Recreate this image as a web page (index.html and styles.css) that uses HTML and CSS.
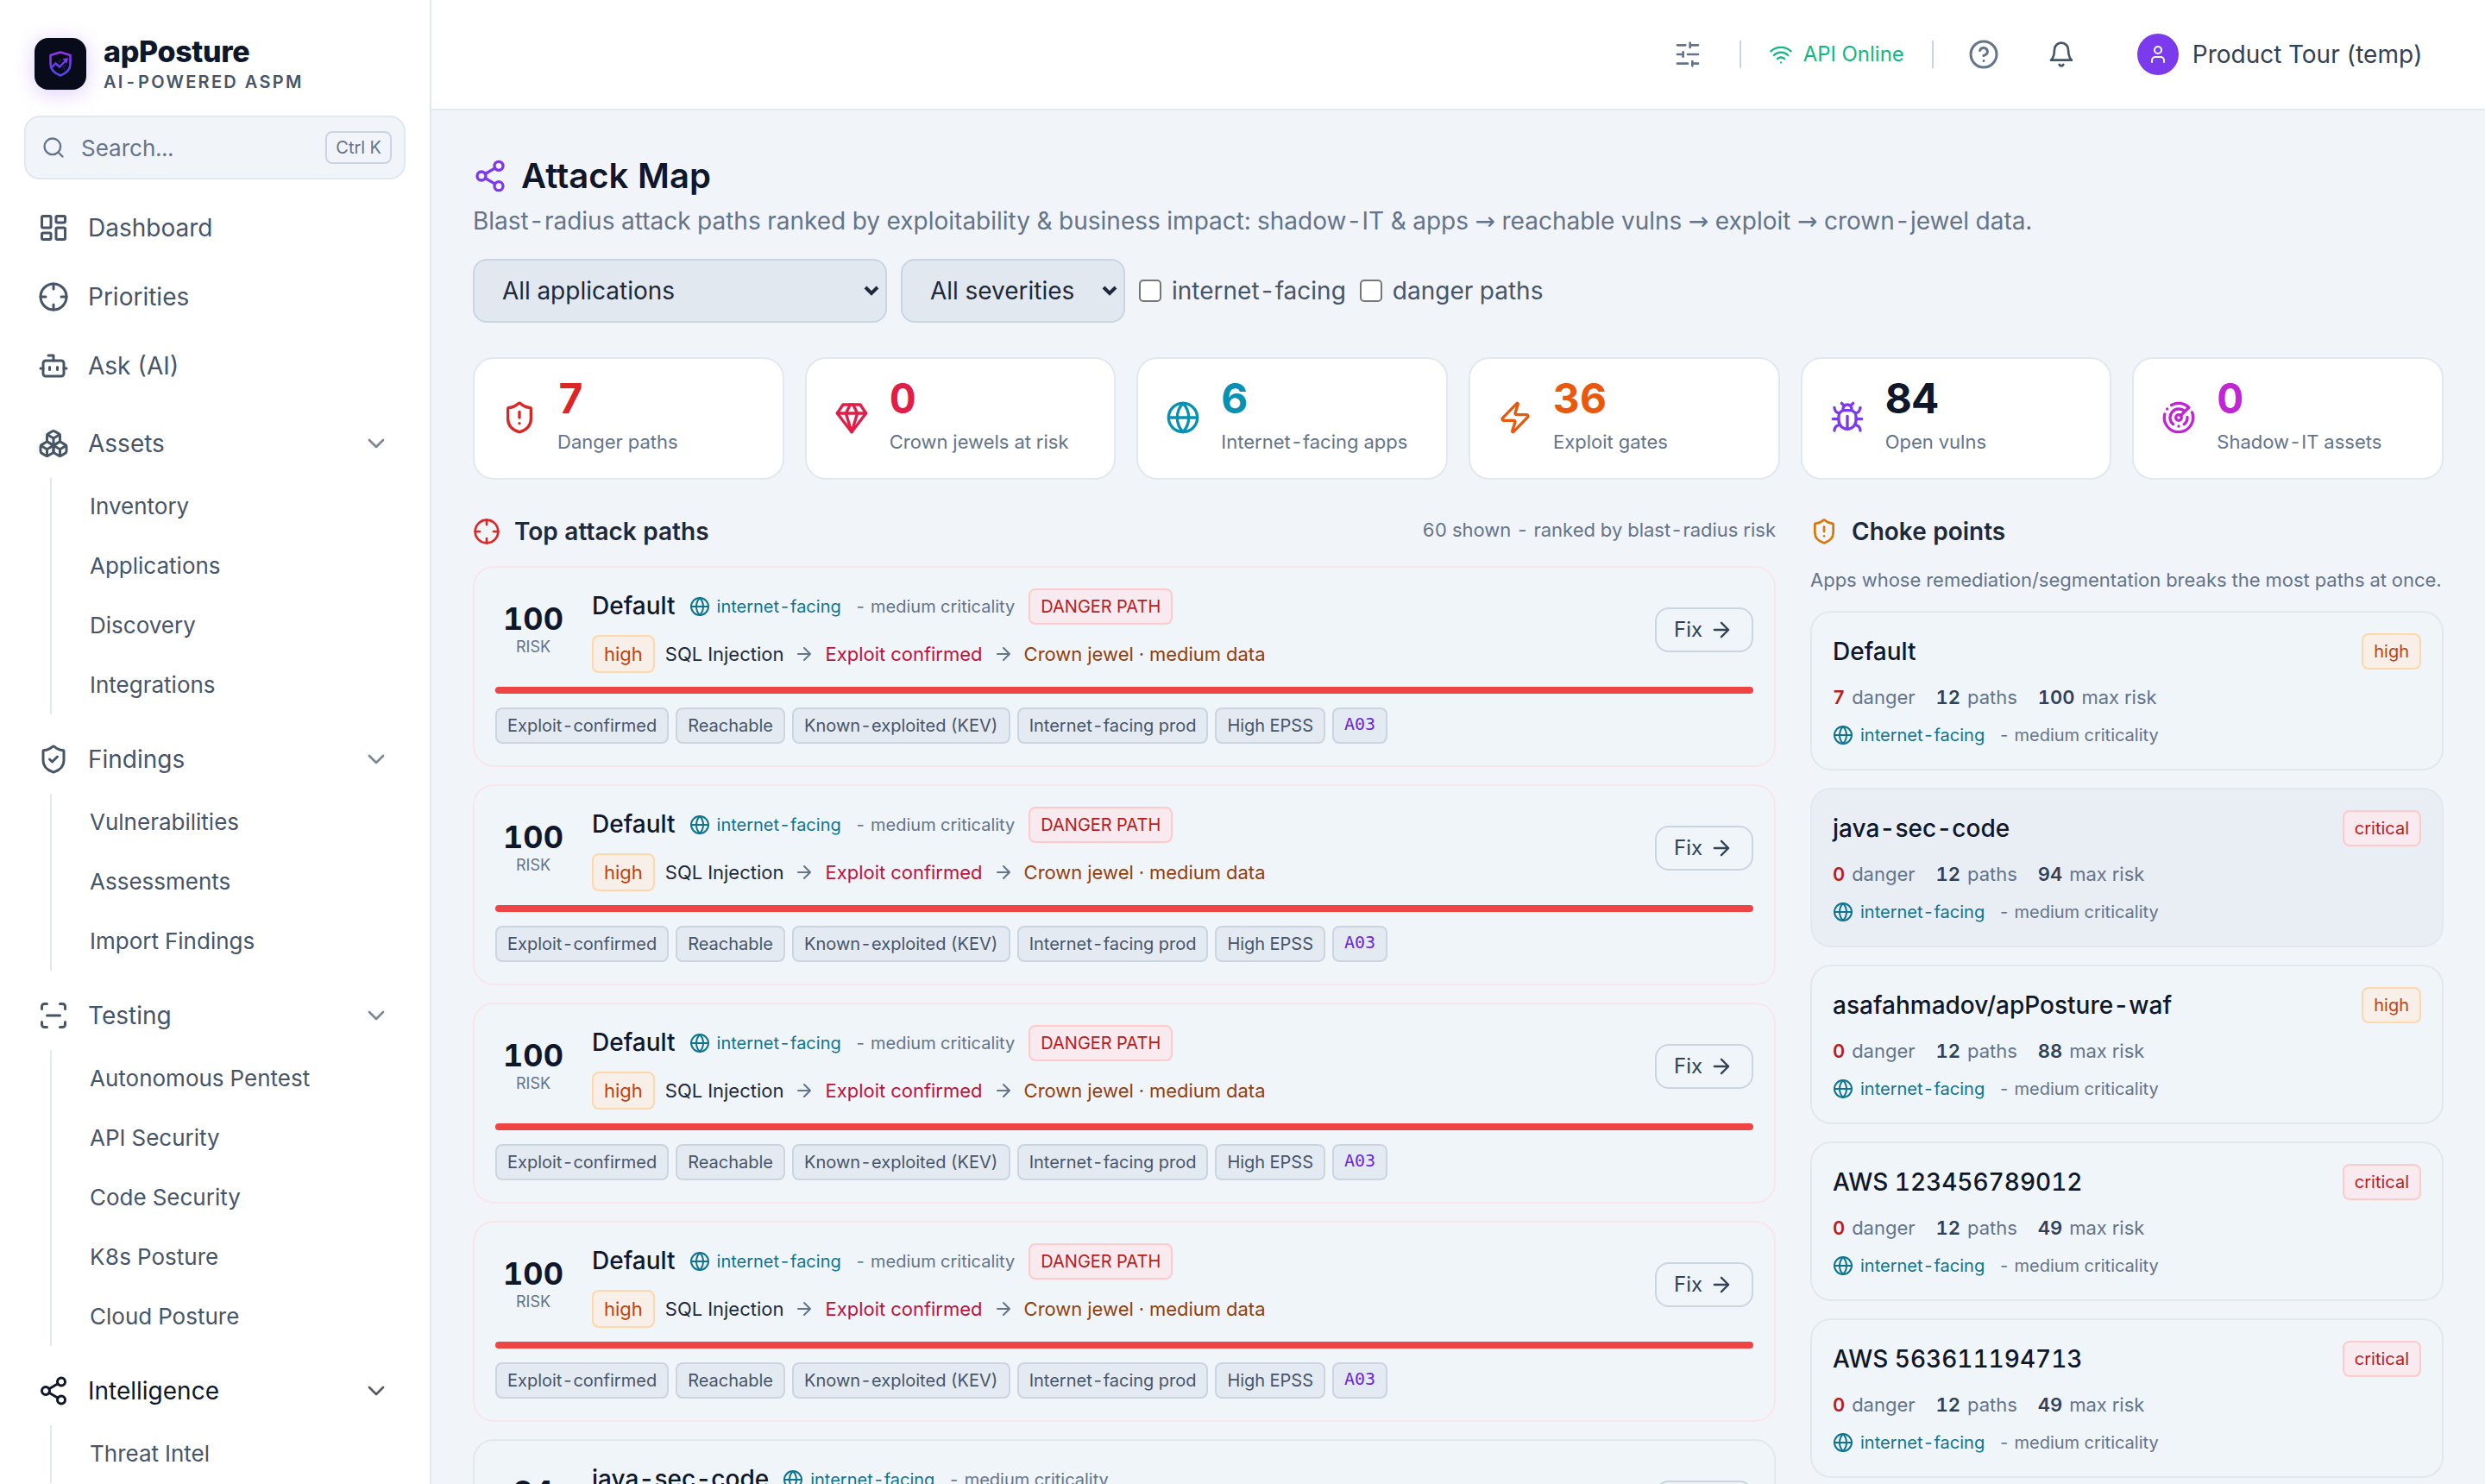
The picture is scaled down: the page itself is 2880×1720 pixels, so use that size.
FILE: index.html
```html
<!DOCTYPE html>
<html lang="en">
<head>
    <meta charset="UTF-8">
    <meta name="viewport" content="width=device-width, initial-scale=1.0">
    <title>apPosture - Attack Map</title>
    <link rel="stylesheet" href="styles.css">
</head>
<body>
    <!-- Icon sprite -->
    <svg class="sprite" aria-hidden="true">
        <symbol id="i-dashboard" viewBox="0 0 24 24"><rect width="7" height="9" x="3" y="3" rx="1"/><rect width="7" height="5" x="14" y="3" rx="1"/><rect width="7" height="9" x="14" y="12" rx="1"/><rect width="7" height="5" x="3" y="16" rx="1"/></symbol>
        <symbol id="i-crosshair" viewBox="0 0 24 24"><circle cx="12" cy="12" r="10"/><path d="M22 12h-4M6 12H2M12 6V2M12 22v-4"/></symbol>
        <symbol id="i-bot" viewBox="0 0 24 24"><path d="M12 8V4H8"/><rect width="16" height="12" x="4" y="8" rx="2"/><path d="M2 14h2M20 14h2M15 13v2M9 13v2"/></symbol>
        <symbol id="i-boxes" viewBox="0 0 24 24"><path d="M2.97 12.92A2 2 0 0 0 2 14.63v3.24a2 2 0 0 0 .97 1.71l3 1.8a2 2 0 0 0 2.06 0L12 19v-5.5l-5-3-4.03 2.42Z"/><path d="m7 16.5-4.74-2.85M7 16.5l5-3M7 16.5v5.17"/><path d="M12 13.5V19l3.97 2.38a2 2 0 0 0 2.06 0l3-1.8a2 2 0 0 0 .97-1.71v-3.24a2 2 0 0 0-.97-1.71L17 10.5l-5 3Z"/><path d="m17 16.5-5-3M17 16.5l4.74-2.85M17 16.5v5.17"/><path d="M7.97 4.42A2 2 0 0 0 7 6.13v4.37l5 3 5-3V6.13a2 2 0 0 0-.97-1.71l-3-1.8a2 2 0 0 0-2.06 0l-3 1.8Z"/><path d="M12 8 7.26 5.15M12 8l4.74-2.85M12 13.5V8"/></symbol>
        <symbol id="i-shield-check" viewBox="0 0 24 24"><path d="M20 13c0 5-3.5 7.5-7.66 8.95a1 1 0 0 1-.67-.01C7.5 20.5 4 18 4 13V6a1 1 0 0 1 1-1c2 0 4.5-1.2 6.24-2.72a1.17 1.17 0 0 1 1.52 0C14.51 3.81 17 5 19 5a1 1 0 0 1 1 1z"/><path d="m9 12 2 2 4-4"/></symbol>
        <symbol id="i-shield-alert" viewBox="0 0 24 24"><path d="M20 13c0 5-3.5 7.5-7.66 8.95a1 1 0 0 1-.67-.01C7.5 20.5 4 18 4 13V6a1 1 0 0 1 1-1c2 0 4.5-1.2 6.24-2.72a1.17 1.17 0 0 1 1.52 0C14.51 3.81 17 5 19 5a1 1 0 0 1 1 1z"/><path d="M12 8v4M12 16h.01"/></symbol>
        <symbol id="i-scan" viewBox="0 0 24 24"><path d="M3 7V5a2 2 0 0 1 2-2h2M17 3h2a2 2 0 0 1 2 2v2M21 17v2a2 2 0 0 1-2 2h-2M7 21H5a2 2 0 0 1-2-2v-2M7 12h10"/></symbol>
        <symbol id="i-share" viewBox="0 0 24 24"><circle cx="18" cy="5" r="3"/><circle cx="6" cy="12" r="3"/><circle cx="18" cy="19" r="3"/><path d="m8.59 13.51 6.83 3.98M15.41 6.51l-6.82 3.98"/></symbol>
        <symbol id="i-chevron" viewBox="0 0 24 24"><path d="m6 9 6 6 6-6"/></symbol>
        <symbol id="i-search" viewBox="0 0 24 24"><circle cx="11" cy="11" r="8"/><path d="m21 21-4.3-4.3"/></symbol>
        <symbol id="i-sliders" viewBox="0 0 24 24"><path d="M21 4h-7M10 4H3M21 12h-9M8 12H3M21 20h-5M12 20H3M14 2v4M8 10v4M16 18v4"/></symbol>
        <symbol id="i-wifi" viewBox="0 0 24 24"><path d="M12 20h.01M2 8.82a15 15 0 0 1 20 0M5 12.859a10 10 0 0 1 14 0M8.5 16.429a5 5 0 0 1 7 0"/></symbol>
        <symbol id="i-help" viewBox="0 0 24 24"><circle cx="12" cy="12" r="10"/><path d="M9.09 9a3 3 0 0 1 5.83 1c0 2-3 3-3 3M12 17h.01"/></symbol>
        <symbol id="i-bell" viewBox="0 0 24 24"><path d="M6 8a6 6 0 0 1 12 0c0 7 3 9 3 9H3s3-2 3-9M10.3 21a1.94 1.94 0 0 0 3.4 0"/></symbol>
        <symbol id="i-user" viewBox="0 0 24 24"><path d="M19 21v-2a4 4 0 0 0-4-4H9a4 4 0 0 0-4 4v2"/><circle cx="12" cy="7" r="4"/></symbol>
        <symbol id="i-gem" viewBox="0 0 24 24"><path d="M6 3h12l4 6-10 13L2 9Z"/><path d="M11 3 8 9l4 13 4-13-3-6M2 9h20"/></symbol>
        <symbol id="i-globe" viewBox="0 0 24 24"><circle cx="12" cy="12" r="10"/><path d="M12 2a14.5 14.5 0 0 0 0 20 14.5 14.5 0 0 0 0-20M2 12h20"/></symbol>
        <symbol id="i-zap" viewBox="0 0 24 24"><path d="M4 14a1 1 0 0 1-.78-1.63l9.9-10.2a.5.5 0 0 1 .86.46l-1.92 6.02A1 1 0 0 0 13 10h7a1 1 0 0 1 .78 1.63l-9.9 10.2a.5.5 0 0 1-.86-.46l1.92-6.02A1 1 0 0 0 11 14z"/></symbol>
        <symbol id="i-bug" viewBox="0 0 24 24"><path d="m8 2 1.88 1.88M14.12 3.88 16 2M9 7.13v-1a3.003 3.003 0 1 1 6 0v1M12 20c-3.3 0-6-2.7-6-6v-3a4 4 0 0 1 4-4h4a4 4 0 0 1 4 4v3c0 3.3-2.7 6-6 6M12 20v-9M6.53 9C4.6 8.8 3 7.1 3 5M6 13H2M3 21c0-2.1 1.7-3.9 3.8-4M20.97 5c0 2.1-1.6 3.8-3.5 4M22 13h-4M17.2 17c2.1.1 3.8 1.9 3.8 4"/></symbol>
        <symbol id="i-radar" viewBox="0 0 24 24"><path d="M19.07 4.93A10 10 0 0 0 6.99 3.34M4 6h.01M2.29 9.62A10 10 0 1 0 21.31 8.35M16.24 7.76A6 6 0 1 0 8.23 16.67M12 18h.01M17.99 11.66A6 6 0 0 1 15.77 16.67M13.41 10.59l5.66-5.66"/><circle cx="12" cy="12" r="2"/></symbol>
        <symbol id="i-arrow" viewBox="0 0 24 24"><path d="M5 12h14M12 5l7 7-7 7"/></symbol>
    </svg>

    <aside class="sidebar">
        <div class="brand">
            <div class="brand-logo">
                <svg viewBox="0 0 26 30">
                    <defs>
                        <linearGradient id="brandGradient" x1="0" y1="0" x2="0" y2="1">
                            <stop offset="0" stop-color="#9333ea"/>
                            <stop offset="1" stop-color="#4f46e5"/>
                        </linearGradient>
                    </defs>
                    <path d="M13 1.5 24.5 5v10c0 6.500-5 11-11.500 13.500C6.500 26 1.500 21.500 1.500 15V5Z" fill="none" stroke="url(#brandGradient)" stroke-width="2.600" stroke-linejoin="round"/>
                    <path d="m3 19 4.500-4.500 4.500 4L19 11.500" fill="none" stroke="#6d3df0" stroke-width="2.400"/>
                    <path d="m15.500 9.500 6.500-1.500-1.500 6.500Z" fill="#7c3aed"/>
                    <path d="M11 12.500h1.500M13 10.500h1M15.500 19h2M18 17h1.500M17 21h1" stroke="#4c35b5" stroke-width="1.200"/>
                </svg>
            </div>
            <div>
                <div class="brand-name">apPosture</div>
                <div class="brand-tagline">AI-POWERED ASPM</div>
            </div>
        </div>

        <div class="search">
            <svg class="icon"><use href="#i-search"/></svg>
            <span>Search...</span>
            <kbd>Ctrl K</kbd>
        </div>

        <nav class="nav">
            <a class="nav-item"><svg class="icon"><use href="#i-dashboard"/></svg>Dashboard</a>
            <a class="nav-item"><svg class="icon"><use href="#i-crosshair"/></svg>Priorities</a>
            <a class="nav-item"><svg class="icon"><use href="#i-bot"/></svg>Ask (AI)</a>

            <div class="nav-section">
                <div class="nav-item"><svg class="icon"><use href="#i-boxes"/></svg>Assets<svg class="icon chevron"><use href="#i-chevron"/></svg></div>
                <div class="nav-sub">
                    <a>Inventory</a>
                    <a>Applications</a>
                    <a>Discovery</a>
                    <a>Integrations</a>
                </div>
            </div>

            <div class="nav-section">
                <div class="nav-item"><svg class="icon"><use href="#i-shield-check"/></svg>Findings<svg class="icon chevron"><use href="#i-chevron"/></svg></div>
                <div class="nav-sub">
                    <a>Vulnerabilities</a>
                    <a>Assessments</a>
                    <a>Import Findings</a>
                </div>
            </div>

            <div class="nav-section">
                <div class="nav-item"><svg class="icon"><use href="#i-scan"/></svg>Testing<svg class="icon chevron"><use href="#i-chevron"/></svg></div>
                <div class="nav-sub">
                    <a>Autonomous Pentest</a>
                    <a>API Security</a>
                    <a>Code Security</a>
                    <a>K8s Posture</a>
                    <a>Cloud Posture</a>
                </div>
            </div>

            <div class="nav-section">
                <div class="nav-item active"><svg class="icon"><use href="#i-share"/></svg>Intelligence<svg class="icon chevron"><use href="#i-chevron"/></svg></div>
                <div class="nav-sub">
                    <a>Threat Intel</a>
                </div>
            </div>
        </nav>
    </aside>

    <div class="main">
        <header class="topbar">
            <svg class="icon sliders"><use href="#i-sliders"/></svg>
            <span class="divider"></span>
            <div class="api-status"><svg class="icon"><use href="#i-wifi"/></svg>API Online</div>
            <span class="divider"></span>
            <svg class="icon help"><use href="#i-help"/></svg>
            <svg class="icon bell"><use href="#i-bell"/></svg>
            <div class="user">
                <span class="avatar"><svg class="icon"><use href="#i-user"/></svg></span>
                Product Tour (temp)
            </div>
        </header>

        <main class="content">
            <h1><svg class="icon"><use href="#i-share"/></svg>Attack Map</h1>
            <p class="subtitle">Blast-radius attack paths ranked by exploitability &amp; business impact: shadow-IT &amp; apps <i>→</i> reachable vulns <i>→</i> exploit <i>→</i> crown-jewel data.</p>

            <div class="filters">
                <div class="select select-apps">
                    <select><option>All applications</option></select>
                    <svg viewBox="0 0 18 12"><path d="m2 2 7 7 7-7"/></svg>
                </div>
                <div class="select select-severity">
                    <select><option>All severities</option></select>
                    <svg viewBox="0 0 18 12"><path d="m2 2 7 7 7-7"/></svg>
                </div>
                <label><input type="checkbox">internet-facing</label>
                <label><input type="checkbox">danger paths</label>
            </div>

            <div class="stats">
                <div class="stat red"><svg class="icon"><use href="#i-shield-alert"/></svg><div><div class="stat-value">7</div><div class="stat-label">Danger paths</div></div></div>
                <div class="stat rose"><svg class="icon"><use href="#i-gem"/></svg><div><div class="stat-value">0</div><div class="stat-label">Crown jewels at risk</div></div></div>
                <div class="stat cyan"><svg class="icon"><use href="#i-globe"/></svg><div><div class="stat-value">6</div><div class="stat-label">Internet-facing apps</div></div></div>
                <div class="stat orange"><svg class="icon"><use href="#i-zap"/></svg><div><div class="stat-value">36</div><div class="stat-label">Exploit gates</div></div></div>
                <div class="stat violet"><svg class="icon"><use href="#i-bug"/></svg><div><div class="stat-value">84</div><div class="stat-label">Open vulns</div></div></div>
                <div class="stat fuchsia"><svg class="icon"><use href="#i-radar"/></svg><div><div class="stat-value">0</div><div class="stat-label">Shadow-IT assets</div></div></div>
            </div>

            <div class="columns">
                <section>
                    <div class="section-head">
                        <svg class="icon red"><use href="#i-crosshair"/></svg>
                        <h2>Top attack paths</h2>
                        <span class="section-note">60 shown - ranked by blast-radius risk</span>
                    </div>

                    <div class="path-card danger">
                        <div class="path-top">
                            <div class="score"><b>100</b><span>RISK</span></div>
                            <div class="path-info">
                                <div class="path-title"><strong>Default</strong><span class="facing"><svg class="icon"><use href="#i-globe"/></svg>internet-facing</span><span class="criticality">- medium criticality</span><span class="badge critical">DANGER PATH</span></div>
                                <div class="path-chain"><span class="badge high">high</span><span>SQL Injection</span><svg class="icon"><use href="#i-arrow"/></svg><span class="exploit">Exploit confirmed</span><svg class="icon"><use href="#i-arrow"/></svg><span class="jewel">Crown jewel · medium data</span></div>
                            </div>
                            <button class="fix">Fix<svg class="icon"><use href="#i-arrow"/></svg></button>
                        </div>
                        <div class="risk-bar"></div>
                        <div class="chips"><span>Exploit-confirmed</span><span>Reachable</span><span>Known-exploited (KEV)</span><span>Internet-facing prod</span><span>High EPSS</span><span class="owasp">A03</span></div>
                    </div>

                    <div class="path-card danger">
                        <div class="path-top">
                            <div class="score"><b>100</b><span>RISK</span></div>
                            <div class="path-info">
                                <div class="path-title"><strong>Default</strong><span class="facing"><svg class="icon"><use href="#i-globe"/></svg>internet-facing</span><span class="criticality">- medium criticality</span><span class="badge critical">DANGER PATH</span></div>
                                <div class="path-chain"><span class="badge high">high</span><span>SQL Injection</span><svg class="icon"><use href="#i-arrow"/></svg><span class="exploit">Exploit confirmed</span><svg class="icon"><use href="#i-arrow"/></svg><span class="jewel">Crown jewel · medium data</span></div>
                            </div>
                            <button class="fix">Fix<svg class="icon"><use href="#i-arrow"/></svg></button>
                        </div>
                        <div class="risk-bar"></div>
                        <div class="chips"><span>Exploit-confirmed</span><span>Reachable</span><span>Known-exploited (KEV)</span><span>Internet-facing prod</span><span>High EPSS</span><span class="owasp">A03</span></div>
                    </div>

                    <div class="path-card danger">
                        <div class="path-top">
                            <div class="score"><b>100</b><span>RISK</span></div>
                            <div class="path-info">
                                <div class="path-title"><strong>Default</strong><span class="facing"><svg class="icon"><use href="#i-globe"/></svg>internet-facing</span><span class="criticality">- medium criticality</span><span class="badge critical">DANGER PATH</span></div>
                                <div class="path-chain"><span class="badge high">high</span><span>SQL Injection</span><svg class="icon"><use href="#i-arrow"/></svg><span class="exploit">Exploit confirmed</span><svg class="icon"><use href="#i-arrow"/></svg><span class="jewel">Crown jewel · medium data</span></div>
                            </div>
                            <button class="fix">Fix<svg class="icon"><use href="#i-arrow"/></svg></button>
                        </div>
                        <div class="risk-bar"></div>
                        <div class="chips"><span>Exploit-confirmed</span><span>Reachable</span><span>Known-exploited (KEV)</span><span>Internet-facing prod</span><span>High EPSS</span><span class="owasp">A03</span></div>
                    </div>

                    <div class="path-card danger">
                        <div class="path-top">
                            <div class="score"><b>100</b><span>RISK</span></div>
                            <div class="path-info">
                                <div class="path-title"><strong>Default</strong><span class="facing"><svg class="icon"><use href="#i-globe"/></svg>internet-facing</span><span class="criticality">- medium criticality</span><span class="badge critical">DANGER PATH</span></div>
                                <div class="path-chain"><span class="badge high">high</span><span>SQL Injection</span><svg class="icon"><use href="#i-arrow"/></svg><span class="exploit">Exploit confirmed</span><svg class="icon"><use href="#i-arrow"/></svg><span class="jewel">Crown jewel · medium data</span></div>
                            </div>
                            <button class="fix">Fix<svg class="icon"><use href="#i-arrow"/></svg></button>
                        </div>
                        <div class="risk-bar"></div>
                        <div class="chips"><span>Exploit-confirmed</span><span>Reachable</span><span>Known-exploited (KEV)</span><span>Internet-facing prod</span><span>High EPSS</span><span class="owasp">A03</span></div>
                    </div>

                    <div class="path-card">
                        <div class="path-top">
                            <div class="score"><b>94</b><span>RISK</span></div>
                            <div class="path-info">
                                <div class="path-title"><strong>java-sec-code</strong><span class="facing"><svg class="icon"><use href="#i-globe"/></svg>internet-facing</span><span class="criticality">- medium criticality</span></div>
                            </div>
                            <button class="fix">Fix<svg class="icon"><use href="#i-arrow"/></svg></button>
                        </div>
                    </div>
                </section>

                <section>
                    <div class="section-head">
                        <svg class="icon amber"><use href="#i-shield-alert"/></svg>
                        <h2>Choke points</h2>
                    </div>
                    <p class="section-desc">Apps whose remediation/segmentation breaks the most paths at once.</p>

                    <div class="choke-card">
                        <div class="choke-top"><strong>Default</strong><span class="badge high">high</span></div>
                        <div class="choke-stats"><span><b class="hot">7</b> danger</span><span><b>12</b> paths</span><span><b>100</b> max risk</span></div>
                        <div class="choke-meta"><span class="facing"><svg class="icon"><use href="#i-globe"/></svg>internet-facing</span><span class="criticality">- medium criticality</span></div>
                    </div>
                    <div class="choke-card hover">
                        <div class="choke-top"><strong>java-sec-code</strong><span class="badge critical">critical</span></div>
                        <div class="choke-stats"><span><b class="hot">0</b> danger</span><span><b>12</b> paths</span><span><b>94</b> max risk</span></div>
                        <div class="choke-meta"><span class="facing"><svg class="icon"><use href="#i-globe"/></svg>internet-facing</span><span class="criticality">- medium criticality</span></div>
                    </div>
                    <div class="choke-card">
                        <div class="choke-top"><strong>asafahmadov/apPosture-waf</strong><span class="badge high">high</span></div>
                        <div class="choke-stats"><span><b class="hot">0</b> danger</span><span><b>12</b> paths</span><span><b>88</b> max risk</span></div>
                        <div class="choke-meta"><span class="facing"><svg class="icon"><use href="#i-globe"/></svg>internet-facing</span><span class="criticality">- medium criticality</span></div>
                    </div>
                    <div class="choke-card">
                        <div class="choke-top"><strong>AWS 123456789012</strong><span class="badge critical">critical</span></div>
                        <div class="choke-stats"><span><b class="hot">0</b> danger</span><span><b>12</b> paths</span><span><b>49</b> max risk</span></div>
                        <div class="choke-meta"><span class="facing"><svg class="icon"><use href="#i-globe"/></svg>internet-facing</span><span class="criticality">- medium criticality</span></div>
                    </div>
                    <div class="choke-card">
                        <div class="choke-top"><strong>AWS 563611194713</strong><span class="badge critical">critical</span></div>
                        <div class="choke-stats"><span><b class="hot">0</b> danger</span><span><b>12</b> paths</span><span><b>49</b> max risk</span></div>
                        <div class="choke-meta"><span class="facing"><svg class="icon"><use href="#i-globe"/></svg>internet-facing</span><span class="criticality">- medium criticality</span></div>
                    </div>
                </section>
            </div>
        </main>
    </div>
</body>
</html>
```

FILE: styles.css
```css
* {
    box-sizing: border-box;
}

body {
    margin: 0;
    height: 1720px;
    overflow: hidden;
    display: flex;
    background: #f1f4f9;
    color: #0f172a;
    font-family: Inter, 'Liberation Sans', sans-serif;
    font-size: 28px;
    line-height: 1.5;
    font-variant-numeric: tabular-nums;
}

h1, h2, p {
    margin: 0;
}

.sprite {
    position: absolute;
    width: 0;
    height: 0;
}

.icon {
    width: 36px;
    height: 36px;
    flex-shrink: 0;
    fill: none;
    stroke: currentColor;
    stroke-width: 2;
    stroke-linecap: round;
    stroke-linejoin: round;
}

/* Sidebar */
.sidebar {
    width: 500px;
    height: 1720px;
    overflow: hidden;
    flex-shrink: 0;
    background: #fff;
    border-right: 2px solid #e2e8f0;
    padding: 38px 28px 0;
}

.brand {
    display: flex;
    align-items: center;
    gap: 20px;
    height: 72px;
    padding-left: 12px;
    margin-bottom: 24px;
}

.brand-logo {
    width: 60px;
    height: 60px;
    border-radius: 16px;
    background: #070b1a;
    display: flex;
    align-items: center;
    justify-content: center;
    box-shadow: 0 4px 24px rgba(124, 58, 237, 0.25);
}

.brand-logo svg {
    width: 26px;
    height: 30px;
}

.brand-name {
    padding-top: 2px;
    font-size: 34px;
    font-weight: 800;
    line-height: 40px;
    letter-spacing: -0.01em;
}

.brand-tagline {
    font-size: 20px;
    font-weight: 600;
    line-height: 30px;
    letter-spacing: 0.115em;
    color: #475569;
}

.search {
    display: flex;
    align-items: center;
    height: 74px;
    padding: 0 14px 0 18px;
    border: 2px solid #e2e8f0;
    border-radius: 18px;
    background: #f1f4f9;
    color: #64748b;
    font-size: 26px;
}

.search .icon {
    width: 28px;
    height: 28px;
    margin-right: 18px;
}

.search kbd {
    margin-left: auto;
    height: 38px;
    padding: 0 10px;
    border: 2px solid #cbd5e1;
    border-radius: 8px;
    font-family: inherit;
    font-size: 20px;
    line-height: 34px;
}

.nav {
    padding-top: 18px;
    color: #475569;
}

.nav-item {
    display: flex;
    align-items: center;
    gap: 22px;
    height: 76px;
    padding: 0 18px 0 16px;
    margin-bottom: 4px;
}

.nav-item.active {
    color: #0f172a;
}

.nav-section {
    padding-top: 10px;
    margin-bottom: 4px;
}

.nav-section .nav-item {
    margin-bottom: 2px;
}

.nav-item .chevron {
    width: 32px;
    height: 32px;
    margin-left: auto;
    opacity: 0.7;
}

.nav-sub {
    display: flex;
    flex-direction: column;
    gap: 2px;
    margin-left: 30px;
    border-left: 2px solid #e2e8f0;
}

.nav-sub a {
    height: 67px;
    line-height: 65px;
    padding-left: 44px;
    font-size: 26px;
}

/* Top bar */
.main {
    flex: 1;
    min-width: 0;
    height: 1720px;
    overflow: hidden;
}

.topbar {
    height: 128px;
    display: flex;
    align-items: center;
    justify-content: flex-end;
    padding-right: 72px;
    background: #fff;
    border-bottom: 2px solid #e2e8f0;
    color: #64748b;
}

.sliders {
    width: 32px;
    height: 32px;
    margin-right: 44px;
}

.divider {
    width: 2px;
    height: 32px;
    background: #cbd5e1;
}

.api-status {
    display: flex;
    align-items: center;
    gap: 12px;
    margin: 0 32px;
    font-size: 24px;
    color: #10b981;
}

.api-status .icon {
    width: 28px;
    height: 28px;
}

.help {
    margin-left: 40px;
}

.bell {
    width: 32px;
    height: 32px;
    margin-left: 56px;
    color: #475569;
}

.user {
    display: flex;
    align-items: center;
    gap: 16px;
    margin-left: 72px;
    color: #334155;
}

.avatar {
    width: 48px;
    height: 48px;
    border-radius: 50%;
    background: #7c3aed;
    color: #fff;
    display: flex;
    align-items: center;
    justify-content: center;
}

.avatar .icon {
    width: 24px;
    height: 24px;
}

/* Page */
.content {
    padding: 48px;
}

h1 {
    display: flex;
    align-items: center;
    gap: 16px;
    font-size: 40px;
    font-weight: 600;
    line-height: 56px;
}

h1 .icon {
    width: 40px;
    height: 40px;
    color: #7c3aed;
}

.subtitle {
    margin-top: 4px;
    line-height: 40px;
    color: #64748b;
}

.subtitle i {
    font-family: 'DejaVu Sans', sans-serif;
    font-style: normal;
    line-height: 1;
}

.filters {
    display: flex;
    align-items: center;
    gap: 16px;
    margin-top: 24px;
    color: #475569;
}

.select {
    position: relative;
    height: 74px;
}

.select-apps {
    width: 480px;
}

.select-severity {
    width: 260px;
}

.select select {
    appearance: none;
    width: 100%;
    height: 100%;
    padding: 0 32px;
    border: 2px solid #cbd5e1;
    border-radius: 16px;
    background: #e2e8f0;
    color: #1e293b;
    font: inherit;
}

.select svg {
    position: absolute;
    right: 9px;
    top: 31px;
    width: 18px;
    height: 12px;
    fill: none;
    stroke: #1e293b;
    stroke-width: 4;
}

.filters label {
    display: flex;
    align-items: center;
    gap: 12px;
}

.filters input {
    appearance: none;
    width: 26px;
    height: 26px;
    margin: 0;
    border: 2px solid #767676;
    border-radius: 5px;
    background: #fff;
}

.stats {
    display: grid;
    grid-template-columns: repeat(6, 1fr);
    gap: 24px;
    margin-top: 40px;
}

.stat {
    display: flex;
    align-items: center;
    gap: 24px;
    height: 142px;
    padding: 0 32px;
    border: 2px solid #e2e8f0;
    border-radius: 24px;
    background: #fff;
}

.stat .icon {
    width: 40px;
    height: 40px;
    margin-top: -2px;
}

.stat-value {
    font-size: 48px;
    font-weight: 700;
    line-height: 54px;
}

.stat-label {
    font-size: 22px;
    line-height: 46px;
    color: #64748b;
    white-space: nowrap;
}

.red { color: #dc2626; }
.rose { color: #e11d48; }
.cyan { color: #0891b2; }
.orange { color: #ea580c; }
.violet { color: #7c3aed; }
.fuchsia { color: #c026d3; }
.amber { color: #d97706; }

.violet .stat-value {
    color: #0f172a;
}

.columns {
    display: grid;
    grid-template-columns: 1fr 734px;
    gap: 40px;
    margin-top: 40px;
}

.section-head {
    display: flex;
    align-items: center;
    gap: 16px;
    height: 40px;
    margin-bottom: 20px;
}

.section-head .icon {
    width: 32px;
    height: 32px;
}

h2 {
    font-size: 28px;
    font-weight: 600;
    color: #1e293b;
}

.section-note {
    margin: -3px 0 0 auto;
    font-size: 22px;
    color: #64748b;
}

.section-desc {
    margin: -2px 0 18px;
    font-size: 22px;
    line-height: 36px;
    color: #64748b;
    white-space: nowrap;
}

/* Cards */
.path-card {
    height: 233px;
    margin-bottom: 20px;
    padding: 24px;
    border: 2px solid #e2e8f0;
    border-radius: 24px;
    background: #f0f5f9;
}

.path-card.danger {
    border-color: #fae6ea;
}

.path-top {
    display: flex;
    align-items: center;
    gap: 24px;
    height: 98px;
}

.score {
    width: 88px;
    text-align: center;
}

.score b {
    display: block;
    font-size: 36px;
    line-height: 38px;
}

.score span {
    display: block;
    font-size: 18px;
    line-height: 28px;
    color: #64748b;
}

.path-info {
    flex: 1;
    align-self: flex-start;
}

.path-title,
.path-chain {
    display: flex;
    align-items: center;
    height: 42px;
}

.path-title {
    gap: 16px;
}

strong {
    font-weight: 500;
}

.path-title strong {
    margin-top: -2px;
}

.facing,
.criticality {
    display: flex;
    align-items: center;
    gap: 8px;
    font-size: 20px;
    color: #0e7490;
}

.facing .icon {
    width: 24px;
    height: 24px;
}

.criticality {
    color: #64748b;
}

.badge {
    padding: 4px 12px;
    border: 2px solid;
    border-radius: 8px;
    font-size: 20px;
    line-height: 30px;
}

.badge.critical {
    background: #f8eaee;
    border-color: #fecaca;
    color: #b91c1c;
}

.badge.high {
    background: #f8f0e8;
    border-color: #fed7aa;
    color: #c2410c;
}

.path-chain {
    gap: 12px;
    height: 44px;
    margin-top: 12px;
    font-size: 22px;
    color: #1e293b;
}

.path-chain .badge {
    font-size: 22px;
    line-height: 32px;
}

.path-chain .icon {
    width: 24px;
    height: 24px;
    color: #64748b;
}

.exploit {
    color: #be123c;
}

.jewel {
    color: #92400e;
}

.fix {
    display: flex;
    align-items: center;
    gap: 8px;
    height: 52px;
    width: 114px;
    margin-top: -2px;
    padding: 0 20px;
    border: 2px solid #cbd5e1;
    border-radius: 16px;
    background: transparent;
    color: #334155;
    font: inherit;
    font-size: 24px;
}

.fix .icon {
    width: 28px;
    height: 28px;
}

.risk-bar {
    height: 8px;
    margin: 16px 0;
    border-radius: 4px;
    background: #ef4444;
}

.chips {
    display: flex;
    gap: 8px;
}

.chips span {
    padding: 4px 12px;
    border: 2px solid #cbd5e1;
    border-radius: 8px;
    background: #e4eaf2;
    color: #475569;
    font-size: 20px;
    line-height: 30px;
}

.chips .owasp {
    font-family: 'DejaVu Sans Mono', monospace;
    color: #6d28d9;
    line-height: 26px;
}

.choke-card {
    height: 185px;
    margin-bottom: 20px;
    padding: 24px;
    border: 2px solid #e2e8f0;
    border-radius: 24px;
    background: #f0f5f9;
}

.choke-card.hover {
    background: #e9eef5;
}

.choke-top {
    display: flex;
    align-items: center;
    justify-content: space-between;
}

.choke-stats {
    display: flex;
    gap: 24px;
    margin-top: 16px;
    font-size: 22px;
    line-height: 33px;
    color: #64748b;
}

.choke-stats b {
    margin-right: 2px;
    font-weight: 600;
    color: #334155;
}

.choke-stats .hot {
    color: #b91c1c;
}

.choke-meta {
    display: flex;
    gap: 16px;
    margin-top: 12px;
    line-height: 30px;
}
```
